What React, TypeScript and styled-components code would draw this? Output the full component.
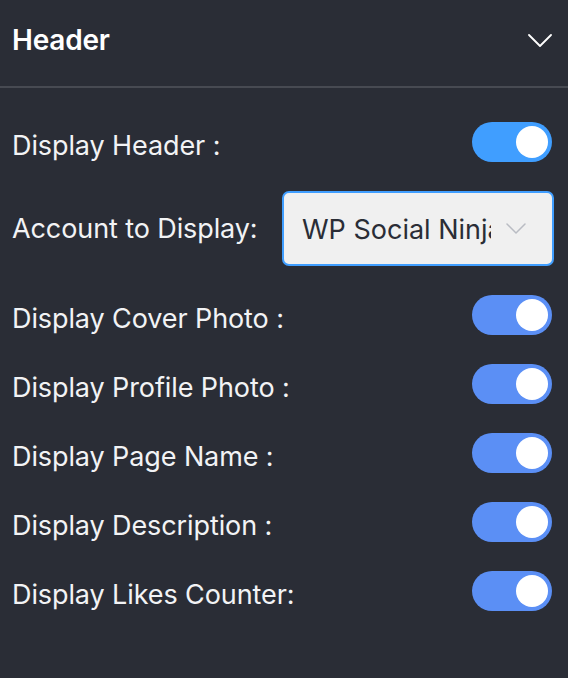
import React from "react";
import styled, { createGlobalStyle } from "styled-components";

const Global = createGlobalStyle`
  html, body { margin: 0; padding: 0; background: #2a2d36; }
  body { font-family: Inter, "Noto Sans", sans-serif; -webkit-font-smoothing: antialiased; }
`;

const Panel = styled.div`
  width: 568px;
  height: 678px;
  background: #2a2d36;
  color: #f2f3f5;
  overflow: hidden;
`;

const HeadBar = styled.div`
  height: 88px;
  display: flex;
  align-items: center;
  justify-content: space-between;
  padding: 0 16px 6px 12px;
  box-sizing: border-box;
  border-bottom: 2px solid #474a52;
`;

const Title = styled.h2`
  margin: 0;
  font-size: 28px;
  font-weight: 600;
  letter-spacing: -0.2px;
  color: #ffffff;
`;

const Body = styled.div`
  display: flex;
  flex-direction: column;
  gap: 29px;
  padding: 34px 16px 0 12px;
`;

const Row = styled.div<{ $h?: number }>`
  height: ${(p) => p.$h ?? 40}px;
  display: flex;
  align-items: center;
  justify-content: space-between;
`;

const Label = styled.span<{ $shift?: number }>`
  font-size: 27px;
  color: #f2f3f5;
  padding-top: ${(p) => p.$shift ?? 6}px;
  letter-spacing: -0.1px;
  white-space: nowrap;
`;

const Toggle = styled.div<{ $bright?: boolean }>`
  width: 80px;
  height: 40px;
  border-radius: 20px;
  background: ${(p) => (p.$bright ? "#409eff" : "#5b8ff5")};
  position: relative;
  flex: none;
  &::after {
    content: "";
    position: absolute;
    right: 4px;
    top: 4px;
    width: 32px;
    height: 32px;
    border-radius: 50%;
    background: #ffffff;
  }
`;

const Select = styled.div`
  width: 272px;
  height: 75px;
  flex: none;
  box-sizing: border-box;
  margin-right: -2px;
  border: 2px solid #409eff;
  border-radius: 7px;
  background: #f0f0f0;
  display: flex;
  align-items: center;
  padding: 0 26px 0 18px;
  gap: 15px;
`;

const SelectText = styled.span`
  flex: 1;
  overflow: hidden;
  white-space: nowrap;
  font-size: 27px;
  color: #2a2d36;
  padding-top: 2px;
`;

const Chevron = ({ color, w, h, sw }: { color: string; w: number; h: number; sw: number }) => (
  <svg width={w} height={h} viewBox={`0 0 ${w} ${h}`} fill="none">
    <path d={`M1 1 L${w / 2} ${h - 1} L${w - 1} 1`} stroke={color} strokeWidth={sw} strokeLinecap="round" strokeLinejoin="round" />
  </svg>
);

const items = [
  "Display Cover Photo :",
  "Display Profile Photo :",
  "Display Page Name :",
  "Display Description :",
  "Display Likes Counter:",
];

export default function App() {
  return (
    <Panel>
      <Global />
      <HeadBar>
        <Title>Header</Title>
        <Chevron color="#ffffff" w={24} h={13} sw={1.8} />
      </HeadBar>
      <Body>
        <Row>
          <Label>Display Header :</Label>
          <Toggle $bright />
        </Row>
        <Row $h={75}>
          <Label $shift={0}>Account to Display:</Label>
          <Select>
            <SelectText>WP Social Ninja</SelectText>
            <Chevron color="#b9bcc3" w={20} h={11} sw={1.5} />
          </Select>
        </Row>
        {items.map((t) => (
          <Row key={t}>
            <Label>{t}</Label>
            <Toggle />
          </Row>
        ))}
      </Body>
    </Panel>
  );
}
